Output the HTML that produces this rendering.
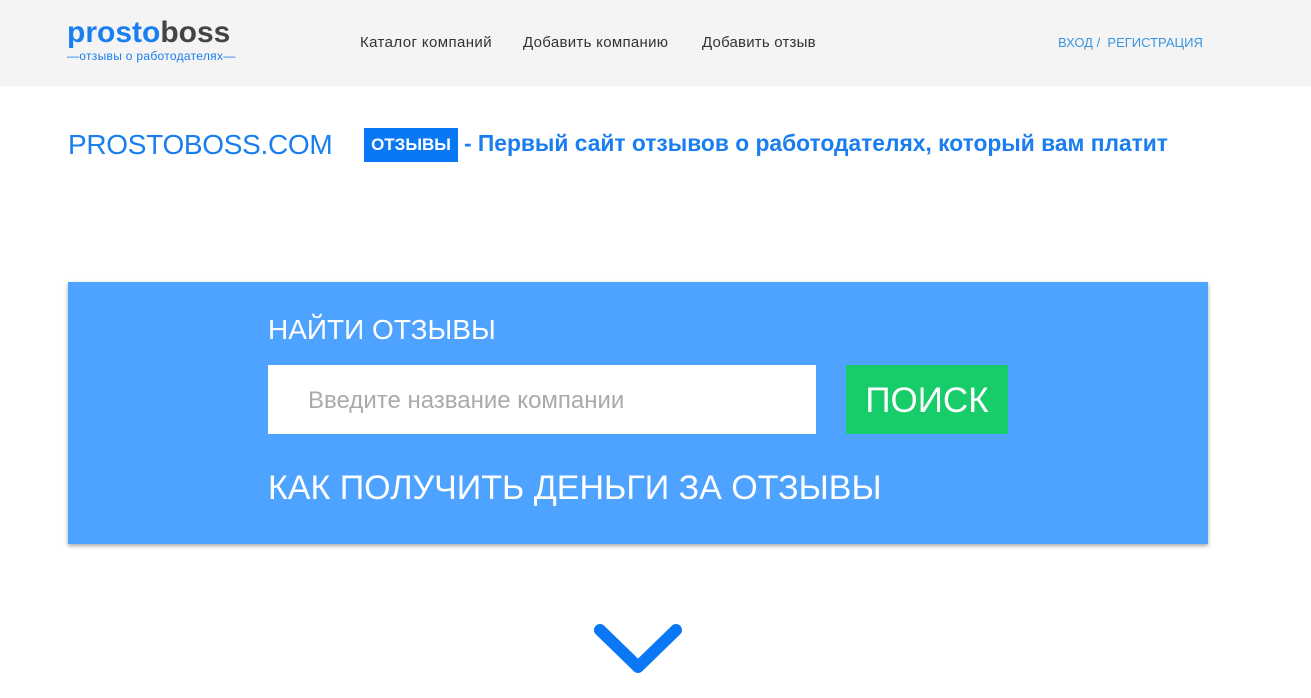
<!DOCTYPE html>
<html><head><meta charset="utf-8"><style>
*{margin:0;padding:0;box-sizing:border-box}
body{width:1311px;height:698px;overflow:hidden;background:#fff;font-family:"Liberation Sans",sans-serif;position:relative}
.hdr{position:absolute;left:0;top:0;width:1311px;height:86px;background:#f4f4f4}
.abs{position:absolute;white-space:nowrap}
</style></head><body>
<div class="hdr"></div>
<div class="abs" style="left:67px;top:15px;font-size:30px;font-weight:bold;letter-spacing:0;line-height:36px"><span style="color:#1a7ef0">prosto</span><span style="color:#444">boss</span></div>
<div class="abs" style="left:67px;top:50px;font-size:12px;color:#1a7ef0;line-height:13px;letter-spacing:0.3px">—отзывы о работодателях—</div>
<div class="abs" style="left:360px;top:34px;font-size:15px;color:#333;letter-spacing:0.4px">Каталог компаний</div>
<div class="abs" style="left:523px;top:34px;font-size:15px;color:#333;letter-spacing:0.3px">Добавить компанию</div>
<div class="abs" style="left:702px;top:34px;font-size:15px;color:#333;letter-spacing:0.2px">Добавить отзыв</div>
<div class="abs" style="left:1058px;top:35px;font-size:13px;color:#3a96e0">ВХОД / &nbsp;РЕГИСТРАЦИЯ</div>
<div class="abs" style="left:68px;top:127px;font-size:28px;color:#1a7ef0;line-height:36px;letter-spacing:-0.3px">PROSTOBOSS.COM</div>
<div class="abs" style="left:364px;top:128px;width:94px;height:34px;background:#0a78f5;color:#fff;font-weight:bold;font-size:17px;line-height:34px;text-align:center">ОТЗЫВЫ</div>
<div class="abs" style="left:464px;top:128px;font-size:22.8px;font-weight:bold;color:#1a7ef0;line-height:30px">- Первый сайт отзывов о работодателях, который вам платит</div>
<div class="abs" style="left:68px;top:282px;width:1140px;height:262px;background:#4da3ff;box-shadow:0 2px 4px rgba(0,0,0,.35)"></div>
<div class="abs" style="left:268px;top:313px;font-size:28px;color:#fff;line-height:34px">НАЙТИ ОТЗЫВЫ</div>
<div class="abs" style="left:268px;top:365px;width:548px;height:69px;background:#fff;color:#aaa;font-size:24px;line-height:71px;padding-left:40px">Введите название компании</div>
<div class="abs" style="left:846px;top:365px;width:162px;height:69px;background:#16cd69;color:#fff;font-size:35px;line-height:71px;text-align:center">ПОИСК</div>
<div class="abs" style="left:268px;top:467px;font-size:34px;color:#fff;line-height:42px">КАК ПОЛУЧИТЬ ДЕНЬГИ ЗА ОТЗЫВЫ</div>
<svg class="abs" style="left:590px;top:620px" width="98" height="60"><polyline points="10,10 48,47 86,10" fill="none" stroke="#0a78f5" stroke-width="12" stroke-linecap="round" stroke-linejoin="round"/></svg>
</body></html>
